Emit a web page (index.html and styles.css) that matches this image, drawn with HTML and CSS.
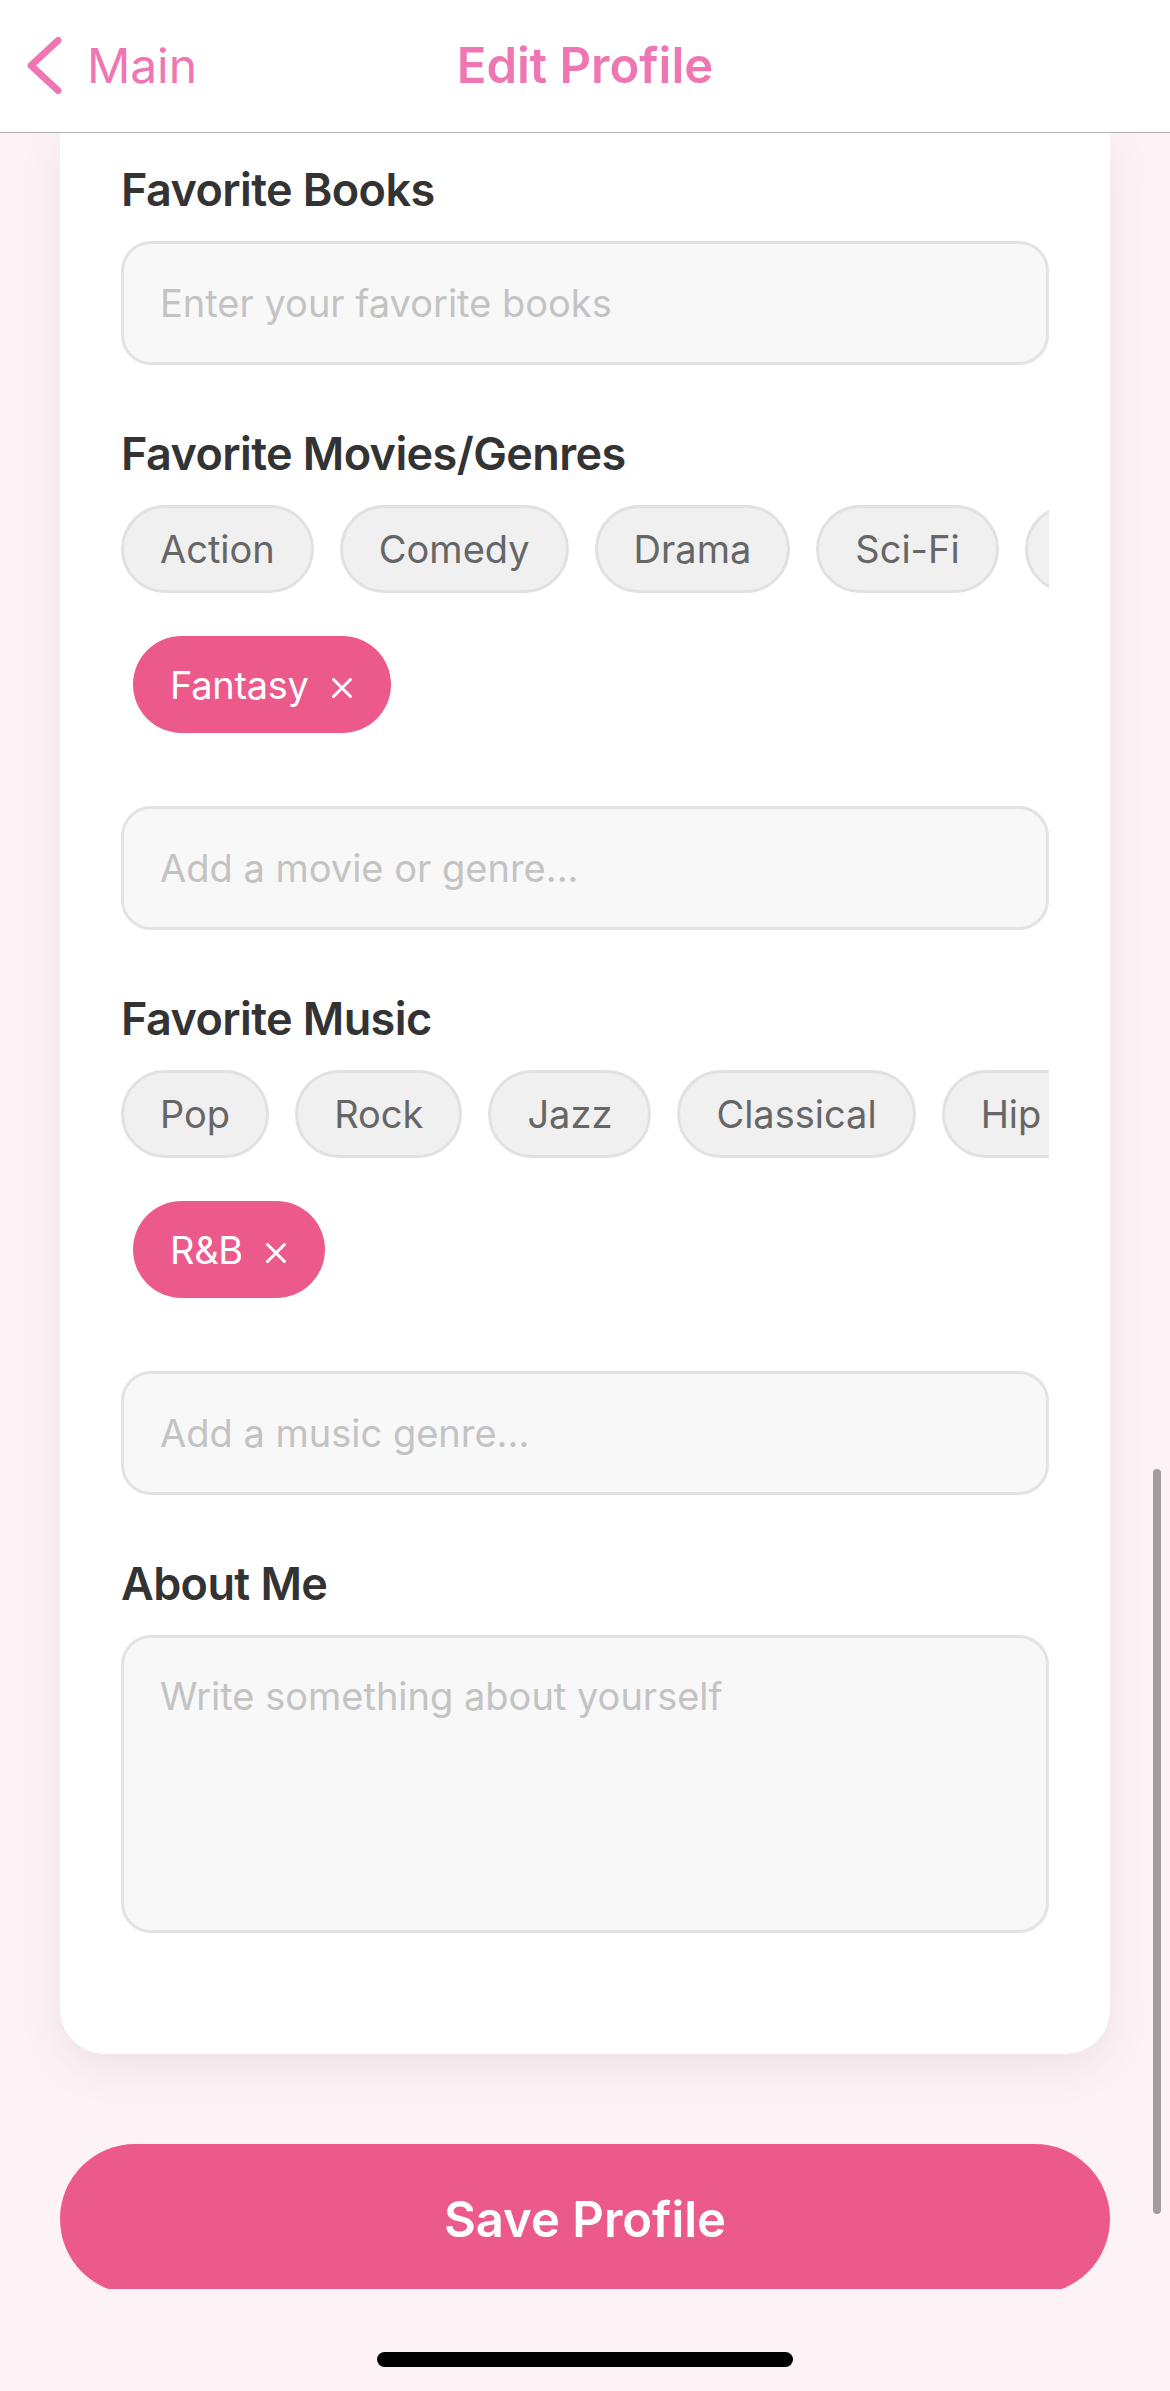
FILE: index.html
```html
<!DOCTYPE html>
<html lang="en">
<head>
<meta charset="utf-8">
<title>Edit Profile</title>
<link rel="stylesheet" href="styles.css">
</head>
<body>
<div class="screen">
  <header class="nav">
    <a class="nav-back">
      <svg class="nav-chevron" width="46" height="70" viewBox="0 0 46 70"><path d="M38 9.5 L11 34.5 L38 59.5" fill="none" stroke="#ee76b3" stroke-width="7" stroke-linecap="round" stroke-linejoin="round"/></svg>
      <span class="nav-back-text">Main</span>
    </a>
    <h1 class="nav-title">Edit Profile</h1>
    <div class="nav-side"></div>
  </header>

  <main class="scroll">
    <section class="card">
      <div class="field">
        <label class="field-label">Favorite Books</label>
        <input class="text-input" type="text" placeholder="Enter your favorite books">
      </div>

      <div class="field">
        <label class="field-label">Favorite Movies/Genres</label>
        <div class="chips">
          <span class="chip">Action</span>
          <span class="chip">Comedy</span>
          <span class="chip">Drama</span>
          <span class="chip">Sci-Fi</span>
          <span class="chip">Horror</span>
        </div>
        <div class="selected">
          <span class="chip-selected">Fantasy<svg class="chip-x" width="22" height="22" viewBox="0 0 22 22"><path d="M2.5 2.5 L19.5 19.5 M19.5 2.5 L2.5 19.5" stroke="#fff" stroke-width="3" stroke-linecap="round"/></svg></span>
        </div>
        <input class="text-input after-chips" type="text" placeholder="Add a movie or genre...">
      </div>

      <div class="field">
        <label class="field-label">Favorite Music</label>
        <div class="chips">
          <span class="chip">Pop</span>
          <span class="chip">Rock</span>
          <span class="chip">Jazz</span>
          <span class="chip">Classical</span>
          <span class="chip">Hip Hop</span>
        </div>
        <div class="selected">
          <span class="chip-selected">R&amp;B<svg class="chip-x" width="22" height="22" viewBox="0 0 22 22"><path d="M2.5 2.5 L19.5 19.5 M19.5 2.5 L2.5 19.5" stroke="#fff" stroke-width="3" stroke-linecap="round"/></svg></span>
        </div>
        <input class="text-input after-chips" type="text" placeholder="Add a music genre...">
      </div>

      <div class="field">
        <label class="field-label">About Me</label>
        <textarea class="text-area" placeholder="Write something about yourself"></textarea>
      </div>
    </section>

    <button class="save-btn">Save Profile</button>
    <div class="scrollbar"></div>
  </main>

  <footer class="home-area">
    <div class="home-indicator"></div>
  </footer>
</div>
</body>
</html>
```

FILE: styles.css
```css
* { box-sizing: border-box; }

html, body {
  margin: 0;
  padding: 0;
}

body {
  width: 1170px;
  height: 2391px;
  overflow: hidden;
  background: #fdf3f6;
  font-family: Inter, "Noto Sans", "Liberation Sans", sans-serif;
  color: #333;
}

.screen {
  width: 1170px;
  height: 2391px;
  display: flex;
  flex-direction: column;
}

/* Navigation bar */
.nav {
  height: 133px;
  flex-shrink: 0;
  background: #fff;
  border-bottom: 1px solid #b4b4b4;
  display: grid;
  grid-template-columns: 1fr auto 1fr;
  align-items: center;
}

.nav-back {
  display: flex;
  align-items: center;
  padding-left: 20px;
  color: #ee76b3;
}

.nav-chevron { display: block; }

.nav-back-text {
  margin-left: 21px;
  font-size: 48px;
  line-height: 60px;
  font-weight: 400;
  letter-spacing: -0.1px;
}

.nav-title {
  margin: 0;
  font-size: 49px;
  line-height: 60px;
  font-weight: 600;
  color: #ee76b3;
  letter-spacing: 0;
}

/* Scroll region */
.scroll {
  position: relative;
  height: 2156px;
  flex-shrink: 0;
  overflow: hidden;
  display: flex;
  flex-direction: column;
  align-items: center;
}

.card {
  width: 1050px;
  background: #fff;
  border-radius: 0 0 45px 45px;
  box-shadow: 0 14px 44px rgba(80, 40, 55, 0.09);
  padding: 29px 61px 121px;
  display: flex;
  flex-direction: column;
  gap: 61px;
}

.field {
  display: flex;
  flex-direction: column;
}

.field-label {
  font-size: 45px;
  line-height: 56px;
  font-weight: 600;
  color: #333;
  margin-bottom: 23px;
  letter-spacing: -0.6px;
}

.text-input,
.text-area {
  width: 100%;
  background: #f8f8f8;
  border: 3px solid #e3e3e3;
  border-radius: 30px;
  font-family: inherit;
  font-size: 38px;
  color: #333;
  outline: none;
}

.text-input {
  height: 124px;
  padding: 0 36px;
}

.text-input.after-chips { margin-top: 73px; }

.text-area {
  height: 298px;
  padding: 35px 36px;
  line-height: 46px;
  resize: none;
  display: block;
}

.text-input::placeholder,
.text-area::placeholder {
  color: #c3c3c3;
  opacity: 1;
}

/* Chips */
.chips {
  display: flex;
  gap: 26px;
  overflow: hidden;
  width: 100%;
}

.chip {
  flex-shrink: 0;
  height: 88px;
  padding: 0 36px;
  display: flex;
  align-items: center;
  background: #f0f0f0;
  border: 3px solid #e1e1e1;
  border-radius: 44px;
  font-size: 38px;
  line-height: 46px;
  color: #666;
  white-space: nowrap;
}

.selected {
  display: flex;
  padding-left: 12px;
  margin-top: 43px;
}

.chip-selected {
  height: 97px;
  padding: 0 38px 0 37px;
  display: flex;
  align-items: center;
  gap: 22px;
  background: #eb5a8a;
  border-radius: 49px;
  font-size: 38px;
  line-height: 46px;
  color: #fff;
  letter-spacing: -0.3px;
}

.chip-x {
  display: block;
  margin-top: 7px;
}

/* Save button */
.save-btn {
  flex-shrink: 0;
  margin-top: 90px;
  width: 1050px;
  height: 150px;
  border: none;
  border-radius: 75px;
  background: #eb5a8a;
  color: #fff;
  font-family: inherit;
  font-size: 49px;
  font-weight: 600;
  letter-spacing: 0;
}

.scrollbar {
  position: absolute;
  top: 1336px;
  right: 9px;
  width: 8px;
  height: 745px;
  border-radius: 4px;
  background: #a29d9e;
}

/* Home indicator area */
.home-area {
  flex: 1;
  display: flex;
  justify-content: center;
  padding-top: 63px;
}

.home-indicator {
  width: 416px;
  height: 15px;
  border-radius: 8px;
  background: #000;
}
```
